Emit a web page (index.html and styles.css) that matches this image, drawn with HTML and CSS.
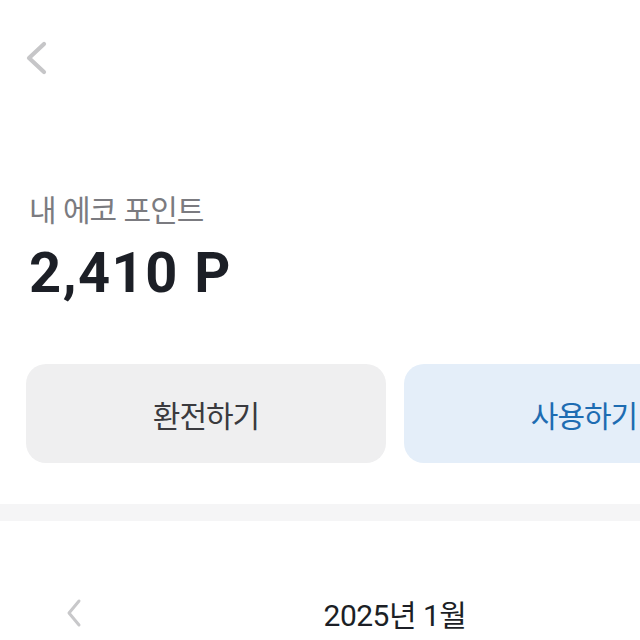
FILE: index.html
```html
<!DOCTYPE html>
<html lang="ko">
<head>
<meta charset="utf-8">
<link rel="stylesheet" href="styles.css">
</head>
<body>
<div class="page">
  <header class="topbar">
    <button class="back" aria-label="뒤로">
      <svg width="22" height="36" viewBox="0 0 22 36"><path d="M19 4 L4 18 L19 32" fill="none" stroke="#c6c6c8" stroke-width="4.2" stroke-linecap="round" stroke-linejoin="round"/></svg>
    </button>
  </header>
  <section class="summary">
    <p class="label">내 에코 포인트</p>
    <p class="points">2,410 P</p>
  </section>
  <div class="actions">
    <button class="btn btn-grey">환전하기</button>
    <button class="btn btn-blue">사용하기</button>
  </div>
  <div class="divider"></div>
  <div class="month">
    <button class="month-nav" aria-label="이전 달">
      <svg width="20" height="34" viewBox="0 0 20 34"><path d="M15 5 L5 17 L15 29" fill="none" stroke="#c8c8ca" stroke-width="3" stroke-linecap="round" stroke-linejoin="round"/></svg>
    </button>
    <span class="month-title">2025년 1월</span>
    <button class="month-nav" aria-label="다음 달">
      <svg width="20" height="34" viewBox="0 0 20 34"><path d="M5 5 L15 17 L5 29" fill="none" stroke="#c8c8ca" stroke-width="3" stroke-linecap="round" stroke-linejoin="round"/></svg>
    </button>
  </div>
</div>
</body>
</html>
```

FILE: styles.css
```css
html, body {
  margin: 0;
  padding: 0;
  background: #ffffff;
  overflow: hidden;
}
body {
  font-family: Roboto, "Noto Sans CJK KR", sans-serif;
  width: 640px;
  height: 640px;
}
.page {
  width: 790px;
}
button {
  font-family: inherit;
  border: none;
  background: none;
  padding: 0;
  margin: 0;
  cursor: pointer;
}
.topbar {
  height: 116px;
  display: flex;
  align-items: flex-start;
  padding-left: 25px;
  padding-top: 40px;
  box-sizing: border-box;
}
.back {
  display: block;
  width: 22px;
  height: 36px;
}
.back svg { display: block; }
.summary {
  padding-left: 29px;
  padding-top: 70px;
}
.label {
  margin: 0;
  font-family: "Noto Sans CJK KR", sans-serif;
  font-size: 30px;
  line-height: 44px;
  color: #7b7b80;
  letter-spacing: -1px;
}
.points {
  margin: 8px 0 0;
  font-family: Roboto, sans-serif;
  font-weight: 700;
  font-size: 56px;
  line-height: 70px;
  color: #1c1f26;
  letter-spacing: 1.5px;
}
.actions {
  display: flex;
  gap: 18px;
  padding: 0 26px;
  margin-top: 56px;
}
.btn {
  flex: 0 0 360px;
  height: 99px;
  border-radius: 20px;
  font-family: "Noto Sans CJK KR", sans-serif;
  font-size: 30px;
  letter-spacing: -1px;
}
.btn-grey {
  background: #efeff0;
  color: #3a3a3e;
}
.btn-blue {
  background: #e4eef9;
  color: #1d6cb2;
}
.divider {
  margin-top: 41px;
  height: 17px;
  background: #f5f5f6;
}
.month {
  display: flex;
  align-items: center;
  justify-content: space-between;
  padding: 0 64px;
  margin-top: 75px;
  height: 34px;
}
.month-nav svg { display: block; }
.month-title {
  font-family: Roboto, "Noto Sans CJK KR", sans-serif;
  font-size: 30px;
  color: #1c1f26;
  letter-spacing: -0.5px;
}
```
